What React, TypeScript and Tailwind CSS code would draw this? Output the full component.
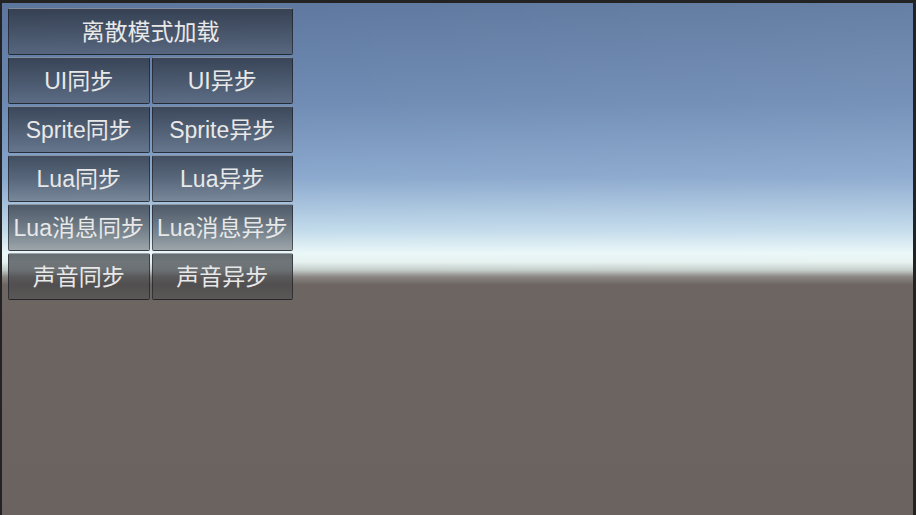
import React from "react";

const rows: string[][] = [
  ["离散模式加载"],
  ["UI同步", "UI异步"],
  ["Sprite同步", "Sprite异步"],
  ["Lua同步", "Lua异步"],
  ["Lua消息同步", "Lua消息异步"],
  ["声音同步", "声音异步"],
];

function GameButton({ label, wide }: { label: string; wide?: boolean }) {
  return (
    <button
      className={
        wide
          ? "col-span-2 h-[47px] pt-[1px] flex items-center justify-center rounded-[2px] border border-[rgba(20,22,28,0.55)] border-t-[rgba(150,158,172,0.7)] bg-[linear-gradient(to_bottom,rgba(34,37,44,0.66),rgba(70,72,76,0.45))] text-[23px] leading-none text-[#e8e8e8] whitespace-nowrap"
          : "h-[47px] pt-[1px] flex items-center justify-center rounded-[2px] border border-[rgba(20,22,28,0.55)] border-t-[rgba(150,158,172,0.7)] bg-[linear-gradient(to_bottom,rgba(34,37,44,0.66),rgba(70,72,76,0.45))] text-[23px] leading-none text-[#e8e8e8] whitespace-nowrap"
      }
    >
      {label}
    </button>
  );
}

export default function App() {
  return (
    <div className="w-[916px] h-[515px] overflow-hidden border-t-[3px] border-l-[2px] border-r-[3px] border-[#232323] bg-[#232323] font-['Liberation_Sans','Noto_Sans_CJK_SC',sans-serif]">
      {/* Skybox */}
      <div className="relative w-full h-full bg-[linear-gradient(to_bottom,#5b759d_0px,#6d8ab3_100px,#89a7cd_175px,#c2dbeb_228px,#eaf7f8_250px,#e6f2f0_259px,#c2ccc8_267px,#8a8582_274px,#6c6561_282px,#6b635f_512px)]">
        <div className="absolute inset-x-0 top-0 h-[270px] bg-[linear-gradient(to_right,rgba(255,255,255,0),rgba(255,255,255,0.07))] pointer-events-none" />

        {/* Button panel */}
        <div className="relative pl-[6px] pt-[5px]">
          <div className="w-[285px] grid grid-cols-2 gap-x-[2px] gap-y-[2px]">
            {rows.map((row) =>
              row.length === 1 ? (
                <GameButton key={row[0]} label={row[0]} wide />
              ) : (
                row.map((l) => <GameButton key={l} label={l} />)
              )
            )}
          </div>
        </div>
      </div>
    </div>
  );
}
